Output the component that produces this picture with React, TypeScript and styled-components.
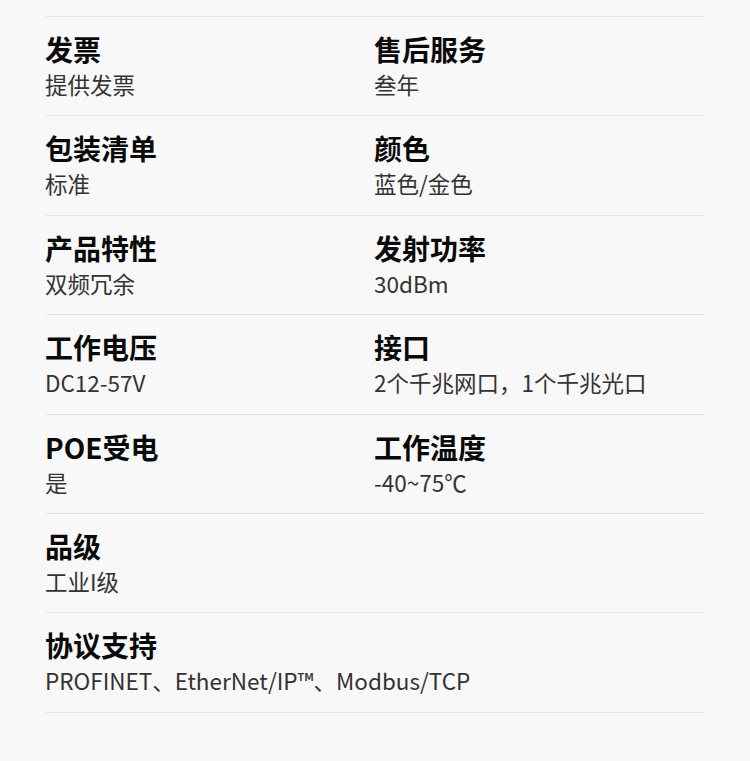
import React from 'react';
import styled, { createGlobalStyle } from 'styled-components';

const GlobalStyle = createGlobalStyle`
  html, body {
    margin: 0;
    padding: 0;
    background: #f8f8f8;
  }
  body {
    font-family: 'Noto Sans CJK SC', 'Noto Sans', sans-serif;
  }
`;

const Page = styled.div`
  min-height: 100vh;
  box-sizing: border-box;
  padding: 16px 46px 0;
  background: #f8f8f8;
`;

const List = styled.div`
  border-top: 1px solid #e4e4e4;
`;

const Row = styled.div`
  display: grid;
  grid-template-columns: 329px 1fr;
  height: 99.4px;
  box-sizing: border-box;
  padding-top: 16px;
  border-bottom: 1px solid #e4e4e4;
`;

const Cell = styled.div<{ $wide?: boolean }>`
  display: flex;
  flex-direction: column;
  grid-column: ${(p) => (p.$wide ? '1 / -1' : 'auto')};
`;

const Title = styled.div`
  font-size: 28px;
  line-height: 32px;
  font-weight: 700;
  color: #0a0a0a;
  margin-left: -1px;
`;

const Value = styled.div`
  margin-top: 6px;
  font-size: 22.5px;
  line-height: 27px;
  font-weight: 400;
  color: #333;
  margin-left: -1px;
`;

type Spec = { title: string; value: string };

const rows: Spec[][] = [
  [
    { title: '发票', value: '提供发票' },
    { title: '售后服务', value: '叁年' },
  ],
  [
    { title: '包装清单', value: '标准' },
    { title: '颜色', value: '蓝色/金色' },
  ],
  [
    { title: '产品特性', value: '双频冗余' },
    { title: '发射功率', value: '30dBm' },
  ],
  [
    { title: '工作电压', value: 'DC12-57V' },
    { title: '接口', value: '2个千兆网口，1个千兆光口' },
  ],
  [
    { title: 'POE受电', value: '是' },
    { title: '工作温度', value: '-40~75℃' },
  ],
  [{ title: '品级', value: '工业I级' }],
  [{ title: '协议支持', value: 'PROFINET、EtherNet/IP™、Modbus/TCP' }],
];

const App = () => {
  return (
    <>
      <GlobalStyle />
      <Page>
        <List>
          {rows.map((row, i) => (
            <Row key={i}>
              {row.map((spec) => (
                <Cell key={spec.title} $wide={row.length === 1}>
                  <Title>{spec.title}</Title>
                  <Value>{spec.value}</Value>
                </Cell>
              ))}
            </Row>
          ))}
        </List>
      </Page>
    </>
  );
};

export default App;
